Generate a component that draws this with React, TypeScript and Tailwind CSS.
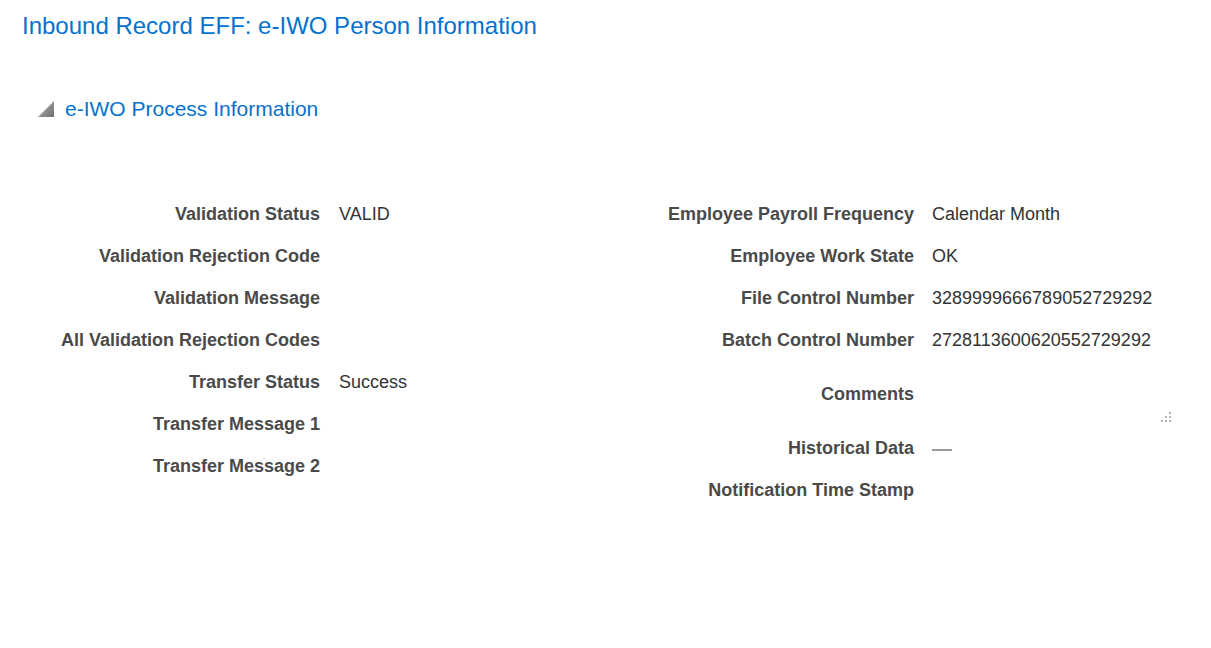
import React from "react";

const font = { fontFamily: '"Liberation Sans", Arial, sans-serif' };

type Row = { label: string; value?: React.ReactNode; tall?: boolean };

const left: Row[] = [
  { label: "Validation Status", value: "VALID" },
  { label: "Validation Rejection Code" },
  { label: "Validation Message" },
  { label: "All Validation Rejection Codes" },
  { label: "Transfer Status", value: "Success" },
  { label: "Transfer Message 1" },
  { label: "Transfer Message 2" },
];

function Handle() {
  return (
    <div className="absolute right-0 bottom-[5px] w-[10px] h-[10px] grid grid-cols-[2px_2px_2px] grid-rows-[2px_2px_2px] gap-[2px]">
      <span />
      <span />
      <span className="bg-[#b3b3b3]" />
      <span />
      <span className="bg-[#b3b3b3]" />
      <span className="bg-[#b3b3b3]" />
      <span className="bg-[#b3b3b3]" />
      <span className="bg-[#b3b3b3]" />
      <span className="bg-[#b3b3b3]" />
    </div>
  );
}

const right: Row[] = [
  { label: "Employee Payroll Frequency", value: "Calendar Month" },
  { label: "Employee Work State", value: "OK" },
  { label: "File Control Number", value: "3289999666789052729292" },
  { label: "Batch Control Number", value: "2728113600620552729292" },
  {
    label: "Comments",
    tall: true,
    value: (
      <div className="relative w-[239px] self-stretch">
        <Handle />
      </div>
    ),
  },
  {
    label: "Historical Data",
    value: <div className="w-[20px] h-[2px] bg-[#9a9a9a] mt-[3px]" />,
  },
  { label: "Notification Time Stamp" },
];

function Form({ rows, labelW, gap }: { rows: Row[]; labelW: number; gap: number }) {
  return (
    <div className="flex flex-col">
      {rows.map((r) => (
        <div key={r.label} className={`flex ${r.tall ? "h-[66px]" : "h-[42px]"}`}>
          <div
            className="text-right font-bold text-[18px] text-[#4a4a4a] flex items-center justify-end shrink-0"
            style={{ width: labelW }}
          >
            {r.label}
          </div>
          <div
            className="text-[18px] text-[#333333] flex items-center"
            style={{ paddingLeft: gap }}
          >
            {r.value}
          </div>
        </div>
      ))}
    </div>
  );
}

export default function App() {
  return (
    <div className="w-[1211px] h-[648px] bg-white" style={font}>
      <h1 className="pl-[22px] pt-[10px] text-[24px] leading-[32px] text-[#0572ce]">
        Inbound Record EFF: e-IWO Person Information
      </h1>
      <div className="flex items-center pl-[38px] mt-[52px] h-[30px]">
        <svg width="16" height="16" viewBox="0 0 16 16" className="mr-[11px]">
          <defs>
            <linearGradient id="tg" x1="0" y1="0" x2="1" y2="1">
              <stop offset="0" stopColor="#b8b8b8" />
              <stop offset="1" stopColor="#6e6e6e" />
            </linearGradient>
          </defs>
          <polygon points="0,16 16,0 16,16" fill="url(#tg)" />
        </svg>
        <span className="text-[21px] text-[#0572ce]">e-IWO Process Information</span>
      </div>
      <div className="flex mt-[69px]">
        <div className="w-[594px] pl-[40px]">
          <Form rows={left} labelW={280} gap={19} />
        </div>
        <div>
          <Form rows={right} labelW={320} gap={18} />
        </div>
      </div>
    </div>
  );
}
